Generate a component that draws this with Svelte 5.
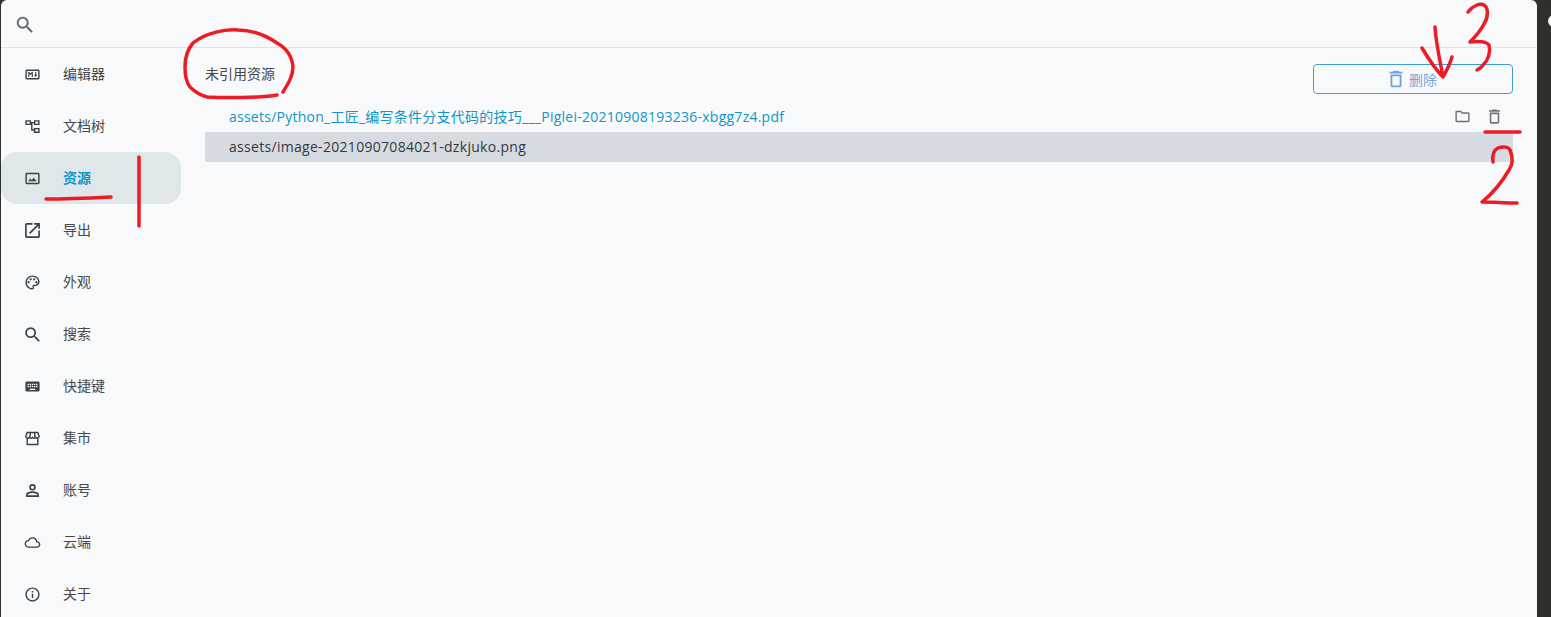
<script>
  const navItems = [
    { label: '编辑器', icon: 'md' },
    { label: '文档树', icon: 'tree' },
    { label: '资源', icon: 'image', active: true },
    { label: '导出', icon: 'export', box: '1.7 1.7 20.6 20.6' },
    { label: '外观', icon: 'palette' },
    { label: '搜索', icon: 'search', box: '1.5 1.5 20.5 20.5' },
    { label: '快捷键', icon: 'keyboard' },
    { label: '集市', icon: 'store' },
    { label: '账号', icon: 'account', box: '1.5 1.5 21 21' },
    { label: '云端', icon: 'cloud', box: '-1 0 26 24' },
    { label: '关于', icon: 'info' }
  ];

  const icons = {
    md: 'M20 5H4a2 2 0 0 0-2 2v10a2 2 0 0 0 2 2h16a2 2 0 0 0 2-2V7a2 2 0 0 0-2-2zm0 12H4V7h16v10zM6 15.500V8.500h1.500l1.750 2.200L11 8.500h1.500v7H11v-4.600l-1.750 2.200-1.750-2.200v4.600H6zm10.500 0L14 12.500h1.750V8.500h1.500v4H19l-2.500 3z',
    tree: 'M2 3h8v7H2V3zm2 2v3h4V5H4zM10 5.500h4v2h-2v8.500h2v2h-4V5.500zM14 3h8v7h-8V3zm2 2v3h4V5h-4zM14 14h8v7h-8v-7zm2 2v3h4v-3h-4z',
    image: 'M20 4H4a2 2 0 0 0-2 2v12a2 2 0 0 0 2 2h16a2 2 0 0 0 2-2V6a2 2 0 0 0-2-2zm0 14H4V6h16v12zM6 16l3-4 2 2.500 2.500-3.500 4.500 5H6z',
    export: 'M19 19H5V5h7V3H5a2 2 0 0 0-2 2v14a2 2 0 0 0 2 2h14a2 2 0 0 0 2-2v-7h-2v7zM14 3v2h3.590l-9.830 9.830 1.410 1.410L19 6.410V10h2V3h-7z',
    palette: 'M12 2C6.490 2 2 6.490 2 12s4.490 10 10 10a2.500 2.500 0 0 0 2.500-2.500c0-.610-.230-1.200-.640-1.670a.530.530 0 0 1 .390-.830H16c3.310 0 6-2.690 6-6 0-4.960-4.490-9-10-9zm-5.500 11C5.670 13 5 12.330 5 11.500S5.670 10 6.500 10 8 10.670 8 11.500 7.330 13 6.500 13zm3-4C8.670 9 8 8.330 8 7.500S8.670 6 9.500 6s1.500.670 1.500 1.500S10.330 9 9.500 9zm5 0C13.670 9 13 8.330 13 7.500S13.670 6 14.500 6s1.500.670 1.500 1.500S15.330 9 14.500 9zm3 4c-.830 0-1.500-.670-1.500-1.500s.670-1.500 1.500-1.500 1.500.670 1.500 1.500-.670 1.500-1.500 1.500zM12 20c-4.410 0-8-3.590-8-8s3.590-8 8-8 8 3.140 8 7c0 2.210-1.790 4-4 4h-1.770c-1.380 0-2.500 1.120-2.500 2.500 0 .600.220 1.180.610 1.640.200.230.300.500.300.860a.5.5 0 0 1-.640 0z',
    search: 'M15.500 14h-.790l-.280-.270A6.470 6.470 0 0 0 16 9.500 6.500 6.500 0 1 0 9.500 16c1.610 0 3.090-.590 4.230-1.570l.270.280v.790l5 4.990L20.490 19l-4.990-5zm-6 0C7.010 14 5 11.990 5 9.500S7.010 5 9.500 5 14 7.010 14 9.500 11.990 14 9.500 14z',
    keyboard: 'M20 5H4a2 2 0 0 0-2 2v10a2 2 0 0 0 2 2h16a2 2 0 0 0 2-2V7a2 2 0 0 0-2-2zm-9 3h2v2h-2V8zm0 3h2v2h-2v-2zM8 8h2v2H8V8zm0 3h2v2H8v-2zm-1 2H5v-2h2v2zm0-3H5V8h2v2zm9 7H8v-2h8v2zm0-4h-2v-2h2v2zm0-3h-2V8h2v2zm3 3h-2v-2h2v2zm0-3h-2V8h2v2z',
    account: 'M12 4a4 4 0 1 0 0 8 4 4 0 0 0 0-8zm0 2a2 2 0 1 1 0 4 2 2 0 0 1 0-4zm0 7c-2.670 0-8 1.340-8 4v3h16v-3c0-2.660-5.330-4-8-4zm-6 5v-.990c.200-.720 3.300-2.010 6-2.010s5.800 1.290 6 2v1H6z',
    cloud: 'M19.350 10.040A7.490 7.490 0 0 0 12 4C9.110 4 6.600 5.640 5.350 8.040A5.994 5.994 0 0 0 0 14c0 3.310 2.690 6 6 6h13c2.760 0 5-2.240 5-5 0-2.640-2.050-4.780-4.650-4.960zM19 18H6c-2.210 0-4-1.790-4-4 0-2.050 1.530-3.760 3.560-3.970l1.070-.110.500-.950A5.469 5.469 0 0 1 12 6c2.620 0 4.880 1.860 5.390 4.430l.300 1.500 1.530.110A2.980 2.980 0 0 1 22 15c0 1.650-1.350 3-3 3z',
    info: 'M11 7h2v2h-2V7zm0 4h2v6h-2v-6zm1-9C6.480 2 2 6.480 2 12s4.480 10 10 10 10-4.480 10-10S17.520 2 12 2zm0 18c-4.410 0-8-3.590-8-8s3.590-8 8-8 8 3.590 8 8-3.590 8-8 8z',
    trash: 'M6 19a2 2 0 0 0 2 2h8a2 2 0 0 0 2-2V7H6v12zM8 9h8v10H8V9zm7.500-5l-1-1h-5l-1 1H5v2h14V4h-3.500z',
    folder: 'M9.170 6l2 2H20v10H4V6h5.170M10 4H4a2 2 0 0 0-2 2v12a2 2 0 0 0 2 2h16a2 2 0 0 0 2-2V8a2 2 0 0 0-2-2h-8l-2-2z'
  };
</script>

<div class="page">
  <div class="panel">
    <header class="search-bar">
      <svg class="search-icon" viewBox="0 0 24 24"><path d={icons.search} /></svg>
    </header>
    <div class="body">
      <nav class="nav">
        {#each navItems as item}
          <div class="nav-item" class:active={item.active}>
            {#if item.icon === 'store'}
              <svg class="nav-icon store" viewBox="0 0 24 24">
                <path d="M4.500 3.500h15l2 5.500a2.800 2.800 0 0 1-4.800 1.500 3 3 0 0 1-4.700 0 3 3 0 0 1-4.700 0A2.800 2.800 0 0 1 2.500 9zM4.500 12v8.500h15V12M9 3.500L8.500 10M15 3.500l.5 6.500" />
              </svg>
            {:else}
              <svg class="nav-icon" viewBox={item.box ?? '0 0 24 24'}><path d={icons[item.icon]} /></svg>
            {/if}
            <span>{item.label}</span>
          </div>
        {/each}
      </nav>
      <main class="content">
        <div class="title-row">
          <span class="title">未引用资源</span>
          <button class="delete-btn">
            <svg viewBox="0 0 24 24"><path d={icons.trash} /></svg>
            删除
          </button>
        </div>
        <div class="file-row link">
          <span>assets/Python_工匠_编写条件分支代码的技巧___Piglei-20210908193236-xbgg7z4.pdf</span>
          <span class="row-actions">
            <svg class="folder" viewBox="0 0 24 24"><path d={icons.folder} /></svg>
            <svg class="trash" viewBox="0 0 24 24"><path d={icons.trash} /></svg>
          </span>
        </div>
        <div class="file-row selected">
          <span>assets/image-20210907084021-dzkjuko.png</span>
        </div>
      </main>
    </div>
  </div>
  <div class="edge-glyph"></div>

  <!-- hand-drawn red marks on top of the screenshot -->
  <svg class="marks" viewBox="0 0 1551 617" fill="none" stroke="#ed1c24" stroke-width="3.500" stroke-linecap="round" stroke-linejoin="round">
    <path d="M283 92C288 84 293 76 293 67C292 55 286 48 277 43C265 35 252 30 238 30C225 29 205 33 193 43C187 50 185 59 185 67C185 76 186 82 190 87C195 92 200 95 207 97C225 98 262 98 277 95" />
    <path d="M46 199C65 199 90 198 111 197" />
    <path d="M139 157L139 226" />
    <path d="M1435 27C1436 45 1441 65 1443 77M1422 48C1428 58 1436 70 1443 77C1447 70 1450 64 1452 57" />
    <path d="M1468 12C1472 6 1480 3 1484 5C1489 8 1488 18 1484 24C1480 32 1475 37 1470 42C1478 41 1486 41 1489 45C1491 52 1488 60 1484 64C1482 67 1479 69 1477 70" />
    <path d="M1485 132L1520 132" />
    <path d="M1493 162C1492 155 1494 150 1498 148C1503 146 1509 147 1510 150C1513 157 1513 164 1509 170C1502 182 1492 194 1482 202C1493 202 1505 203 1517 203" />
  </svg>
</div>

<style>
  :global(body) {
    margin: 0;
    background: #2f2f2c;
  }

  .page {
    position: relative;
    width: 1551px;
    height: 617px;
    overflow: hidden;
    background: #2f2f2c;
    font-family: 'Open Sans', 'Noto Sans', 'Noto Sans CJK SC', sans-serif;
    font-size: 14px;
    color: #45484b;
  }

  .panel {
    width: 1536px;
    height: 617px;
    margin-left: 1px;
    background: #f8f9fb;
    border-radius: 6px 6px 0 0;
    overflow: hidden;
  }

  .search-bar {
    height: 47px;
    border-bottom: 1px solid #e0e2e5;
    display: flex;
    align-items: center;
    padding-left: 13px;
  }

  .search-icon {
    width: 22px;
    height: 22px;
    margin-top: 2px;
    fill: #5f6368;
  }

  .body {
    display: flex;
  }

  .nav {
    width: 180px;
    flex: none;
  }

  .nav-item {
    height: 52px;
    display: flex;
    align-items: center;
    gap: 22px;
    padding: 0 0 2px 23px;
    box-sizing: border-box;
  }

  .nav-item.active {
    background: #e0e7ea;
    border-radius: 16px;
    color: #0f96c4;
    font-weight: 600;
  }

  .nav-icon {
    width: 17px;
    height: 17px;
    margin-top: 2px;
    fill: #3c4043;
    flex: none;
  }

  .nav-icon.store {
    fill: none;
    stroke: #3c4043;
    stroke-width: 2;
  }

  .content {
    flex: 1;
    padding: 0 24px;
  }

  .title-row {
    height: 52px;
    display: flex;
    justify-content: space-between;
    align-items: center;
  }

  .title {
    margin-top: -2px;
  }

  .delete-btn {
    width: 200px;
    height: 30px;
    margin-top: 10px;
    padding: 0 4px 0 0;
    display: flex;
    align-items: center;
    justify-content: center;
    gap: 2px;
    background: transparent;
    border: 1px solid #3ca1d2;
    border-radius: 4px;
    color: #77a5d4;
    font: inherit;
  }

  .delete-btn svg {
    width: 22px;
    height: 22px;
    fill: #6da3d6;
  }

  .file-row {
    height: 30px;
    display: flex;
    align-items: center;
    justify-content: space-between;
    padding: 0 9px 0 24px;
    box-sizing: border-box;
    letter-spacing: 0.25px;
  }

  .file-row.link {
    height: 32px;
    color: #0f96c4;
  }

  .file-row.selected {
    padding-bottom: 2px;
    background: #d5dbe1;
    color: #36393c;
    letter-spacing: 0.3px;
  }

  .row-actions {
    display: flex;
    align-items: center;
    gap: 14px;
  }

  .row-actions .folder {
    width: 17px;
    height: 17px;
    fill: #6f7174;
  }

  .row-actions .trash {
    width: 19px;
    height: 19px;
    fill: #6f7174;
  }

  .edge-glyph {
    position: absolute;
    left: 1548px;
    top: 15px;
    width: 12px;
    height: 12px;
    border-radius: 50%;
    background: #f5f5f5;
  }

  .marks {
    position: absolute;
    inset: 0;
    width: 1551px;
    height: 617px;
    pointer-events: none;
  }
</style>
